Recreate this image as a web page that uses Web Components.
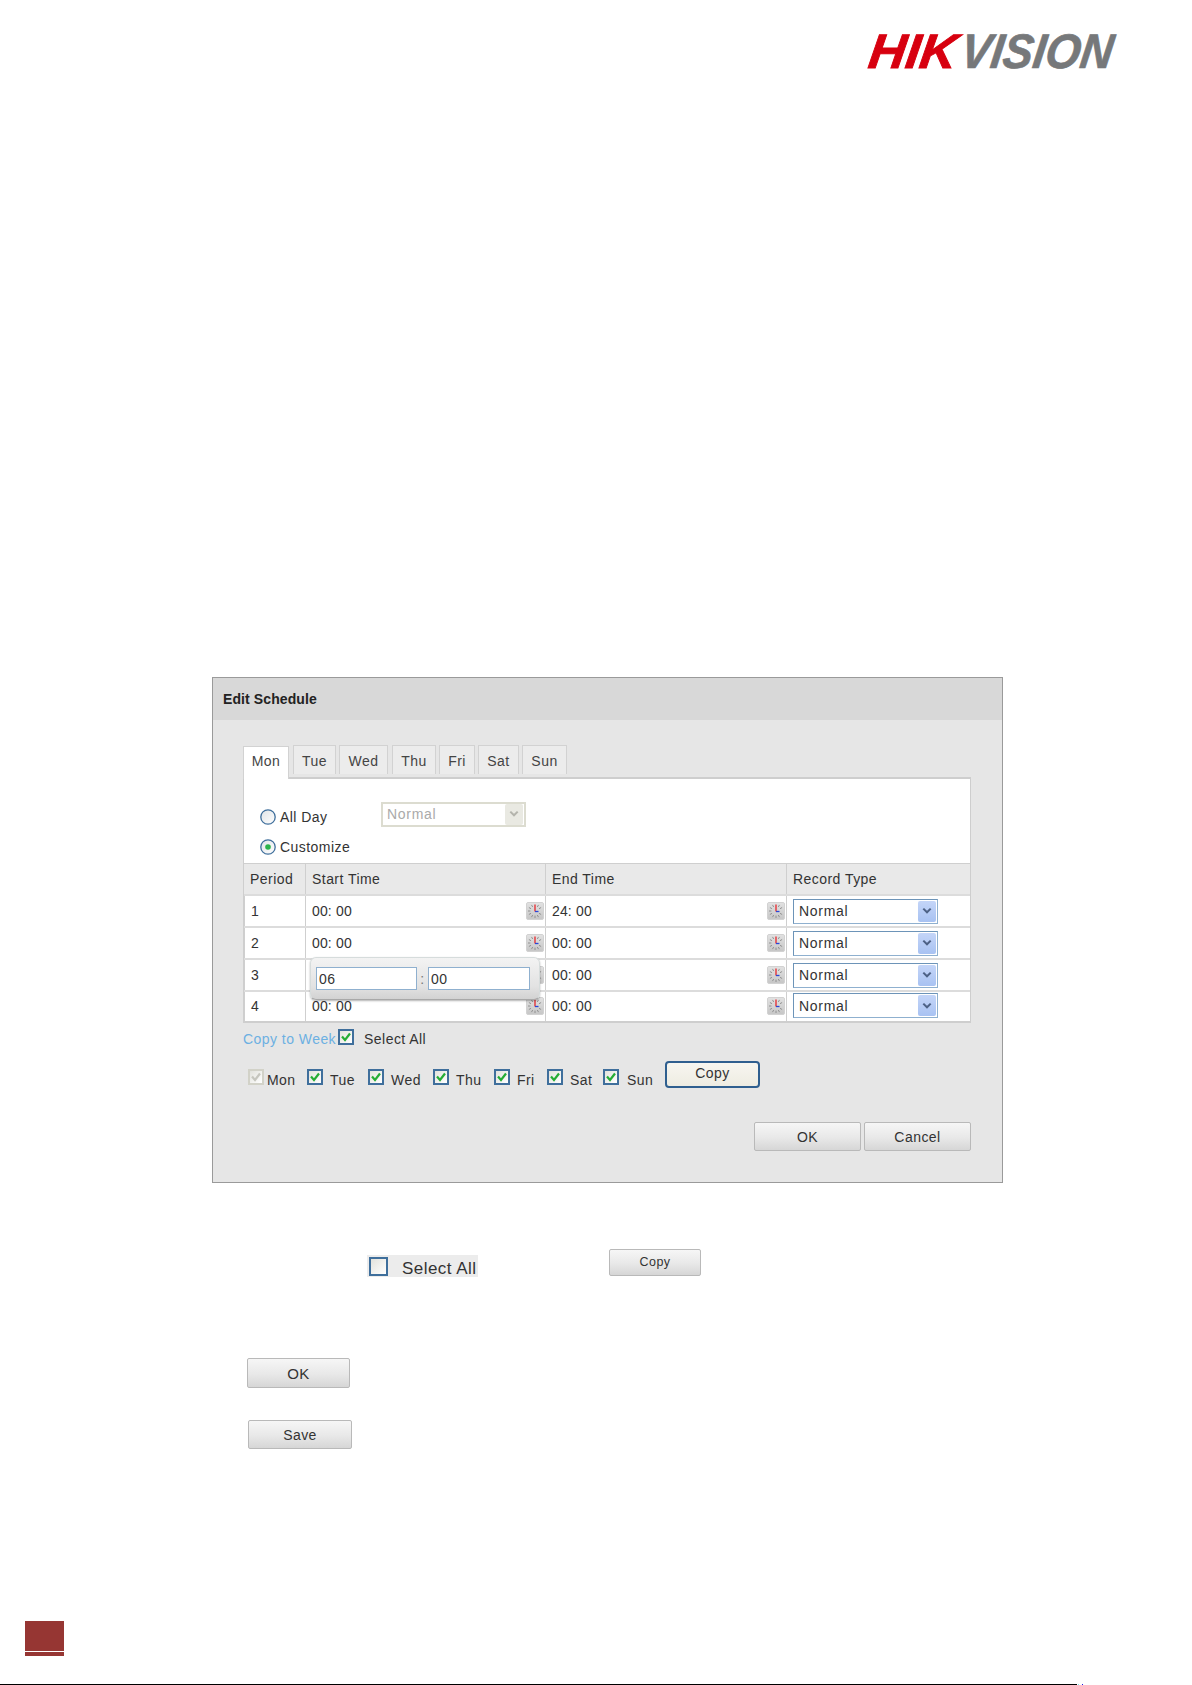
<!DOCTYPE html>
<html>
<head>
<meta charset="utf-8">
<title>Edit Schedule</title>
<style>
  html, body { margin: 0; padding: 0; background: #fff; }
  body { font-family: "Liberation Sans", Arial, sans-serif; font-size: 14px; letter-spacing: .45px; color: #333; }
</style>
</head>
<body>
<manual-page>
  <hik-logo slot="logo"></hik-logo>
  <edit-schedule slot="dialog"></edit-schedule>
  <note-icons slot="notes"></note-icons>
</manual-page>

<script>
class ManualPage extends HTMLElement{
    constructor(){
        super();
        this.attachShadow({mode:'open'});
        this.shadowRoot.innerHTML = `
        <style>
            :host{ display:flex; flex-direction:column; height:1685px; overflow:hidden; box-sizing:border-box; }
            header{ display:flex; justify-content:flex-end; padding:34px 75px 0 0; height:34px; }
            #dialog{ display:block; margin:609px 0 0 212px; }
            footer{ margin-top:auto; }
            #mark{ width:39px; margin-left:25px; }
            #mark div{ background:#963633; }
            #mark .a{ height:30px; margin-bottom:1px; }
            #mark .b{ height:4px; }
            #rule{ display:flex; align-items:stretch; height:1px; margin-top:28px; }
            #rule .line{ width:1077px; background:#000; }
            #rule .c1{ width:1px; margin-left:1px; background:#7fe9e9; }
            #rule .c2{ width:1px; margin-left:3px; background:#1a1ae6; }
        </style>
        <header><slot name="logo"></slot></header>
        <div id="dialog"><slot name="dialog"></slot></div>
        <slot name="notes"></slot>
        <footer>
            <div id="mark"><div class="a"></div><div class="b"></div></div>
            <div id="rule"><div class="line"></div><div class="c1"></div><div class="c2"></div></div>
        </footer>`;
    }
}

class HikLogo extends HTMLElement{
    constructor(){
        super();
        this.attachShadow({mode:'open'});
        this.shadowRoot.innerHTML = `
        <style>
            :host{ display:block; width:250px; height:34px; }
            svg{ display:block; overflow:visible; }
            text{ font-family:"Liberation Sans", Arial, sans-serif; font-weight:700; font-style:italic; font-size:48.5px; letter-spacing:0; }
        </style>
        <svg width="250" height="34" viewBox="0 0 250 34">
            <g transform="translate(0 33.6) skewX(-8)">
                <text x="0" y="0" textLength="88" lengthAdjust="spacingAndGlyphs" fill="#d7000f" stroke="#d7000f" stroke-width=".9">HIK</text>
                <text x="92" y="0" textLength="152" lengthAdjust="spacingAndGlyphs" fill="#76787a" stroke="#76787a" stroke-width=".7">VISION</text>
            </g>
        </svg>`;
    }
}

class HikButton extends HTMLElement{
    constructor(){
        super();
        this.attachShadow({mode:'open'});
        this.shadowRoot.innerHTML = `
        <style>
            :host{ display:flex; align-items:center; justify-content:center; box-sizing:border-box;
                   border:1px solid #b9b9b9; border-radius:2px; color:#333; font-size:14px;
                   background:linear-gradient(#f6f6f6,#e8e8e8 55%,#d6d6d6); }
            :host([primary]){ border:2px solid #2f5f8f; border-radius:4px; background:linear-gradient(#f7f6f0,#eeece2); padding-bottom:2px; }
        </style>
        <slot></slot>`;
    }
}

class HikCheck extends HTMLElement{
    constructor(){
        super();
        this.attachShadow({mode:'open'});
        const off = this.hasAttribute('disabled');
        const on = !this.hasAttribute('empty');
        this.shadowRoot.innerHTML = `
        <style>
            :host{ display:inline-flex; align-items:center; }
            #box{ width:var(--box,16px); height:var(--box,16px); box-sizing:border-box; flex:none;
                  border:2px solid ${off ? '#d2d2c8' : '#3f6f9c'};
                  background:linear-gradient(135deg,#e2e2dc,#fff); display:block; }
            svg{ display:block; }
            span{ margin-left:var(--label-gap,7px); position:relative; top:var(--label-drop,3px); }
        </style>
        <div id="box">${on ? `<svg width="12" height="12" viewBox="0 0 12 12"><path d="M2 5.5 5 9 10 2.5" fill="none" stroke="${off ? '#c6c6be' : '#25ad35'}" stroke-width="2.2"/></svg>` : ''}</div>
        <span><slot></slot></span>`;
    }
}

class HikRadio extends HTMLElement{
    constructor(){
        super();
        this.attachShadow({mode:'open'});
        const on = this.hasAttribute('checked');
        this.shadowRoot.innerHTML = `
        <style>
            :host{ display:flex; align-items:center; height:20px; }
            svg{ display:block; flex:none; margin-right:4px; }
        </style>
        <svg width="16" height="16" viewBox="0 0 16 16">
            <defs><linearGradient id="g" x1="0" y1="0" x2="1" y2="1"><stop offset="0" stop-color="#dfe3e6"/><stop offset="1" stop-color="#fff"/></linearGradient></defs>
            <circle cx="8" cy="8" r="7.2" fill="url(#g)" stroke="#3f6f9c" stroke-width="1.3"/>
            ${on ? '<circle cx="8" cy="8" r="2.8" fill="#2bb34a"/>' : ''}
        </svg>
        <slot></slot>`;
    }
}

class HikTab extends HTMLElement{
    constructor(){
        super();
        this.attachShadow({mode:'open'});
        this.shadowRoot.innerHTML = `
        <style>
            :host{ display:flex; align-items:center; justify-content:center; box-sizing:border-box; height:29px; margin-bottom:3px; padding-top:2px;
                   border:1px solid #d2d2d2; border-bottom:none; background:#ececec; color:#444; }
            :host([active]){ height:33px; background:#fff; margin-bottom:-2px; padding-top:0; padding-bottom:4px; position:relative; z-index:1; }
        </style>
        <slot></slot>`;
    }
}

class ClockIcon extends HTMLElement{
    constructor(){
        super();
        this.attachShadow({mode:'open'});
        let ticks = '';
        for(let i = 0; i < 12; i++){
            if(i === 0 || i === 3) continue;
            const a = i * Math.PI / 6;
            const s = Math.sin(a), c = Math.cos(a);
            ticks += `<line x1="${(9 + s * 4.6).toFixed(1)}" y1="${(9 - c * 4.6).toFixed(1)}" x2="${(9 + s * 7).toFixed(1)}" y2="${(9 - c * 7).toFixed(1)}"/>`;
        }
        this.shadowRoot.innerHTML = `
        <style>
            :host{ display:block; width:18px; height:18px; flex:none; }
            svg{ display:block; }
        </style>
        <svg width="18" height="18" viewBox="0 0 18 18">
            <defs><linearGradient id="g" x1="0" y1="0" x2="0" y2="1"><stop offset="0" stop-color="#e2e2e2"/><stop offset="1" stop-color="#c6c6c6"/></linearGradient></defs>
            <rect x=".5" y=".5" width="17" height="17" rx="1.5" fill="url(#g)" stroke="#d2d2d2"/>
            <g stroke="#8a8a8a" stroke-width=".9">${ticks}</g>
            <line x1="9" y1="2.5" x2="9" y2="9.5" stroke="#e8272c" stroke-width="1.3"/>
            <line x1="9" y1="9.5" x2="12.5" y2="9.5" stroke="#2a47d8" stroke-width="1.3"/>
        </svg>`;
    }
}

class TypeSelect extends HTMLElement{
    constructor(){
        super();
        this.attachShadow({mode:'open'});
        const off = this.hasAttribute('disabled');
        this.shadowRoot.innerHTML = `
        <style>
            :host{ display:flex; align-items:center; justify-content:space-between; box-sizing:border-box; width:145px; height:25px;
                   background:#fff; padding:0 1px 0 5px; color:#333; letter-spacing:.7px;
                   border:1px solid #8fb0cf; border-top-color:#6d94b8; border-left-color:#6d94b8; }
            :host([disabled]){ border:2px solid #dcdcd0; color:#aaa; padding-left:4px; }
            #arrow{ width:18px; height:21px; display:flex; align-items:center; justify-content:center; border-radius:2px;
                    background:${off ? '#e9e9e2' : 'linear-gradient(#c4d5f8,#a8c2f2)'}; }
            svg{ display:block; }
        </style>
        <slot></slot>
        <div id="arrow"><svg width="10" height="8" viewBox="0 0 10 8"><path d="M1.3 1.6 5 5.3 8.7 1.6" fill="none" stroke="${off ? '#b4b4ac' : '#4d6185'}" stroke-width="2"/></svg></div>`;
    }
}

class ScheduleRow extends HTMLElement{
    constructor(){
        super();
        this.attachShadow({mode:'open'});
        const p = this.getAttribute('period');
        const s = this.getAttribute('start') || '';
        const e = this.getAttribute('end');
        this.shadowRoot.innerHTML = `
        <style>
            :host{ display:grid; grid-template-columns:61px 240px 241px 1fr; height:32px; box-sizing:border-box; background:#fff; border-top:2px solid #dcdcdc; padding-bottom:1px; }
            :host(:last-of-type){ height:31px; }
            :host(:last-of-type) div > *{ position:relative; top:-1px; }
            div{ display:flex; align-items:center; justify-content:space-between; padding-left:6px; border-left:1px solid #cfcfcf; margin-bottom:-1px; }
            div:first-child{ border-left:none; }
            span{ letter-spacing:.15px; }
            clock-icon{ margin-right:1px; }
        </style>
        <div><span>${p}</span></div>
        <div><span>${s}</span><clock-icon></clock-icon></div>
        <div><span>${e}</span><clock-icon></clock-icon></div>
        <div><type-select>Normal</type-select></div>`;
    }
}

class TimePopup extends HTMLElement{
    constructor(){
        super();
        this.attachShadow({mode:'open'});
        this.shadowRoot.innerHTML = `
        <style>
            :host{ position:absolute; display:flex; align-items:center; justify-content:space-between; box-sizing:border-box; width:230px; height:43px; padding:0 9px 0 5px;
                   border:1px solid #d6dcdc; border-bottom-color:#a8a8a8; border-radius:6px;
                   background:linear-gradient(#f3f3f3,#e2e2e2 70%,#d2d2d2); box-shadow:0 1px 2px rgba(0,0,0,.3); color:#777; }
            span{ box-sizing:border-box; width:101px; height:23px; line-height:22px; padding-left:2px; background:#fff; color:#333; border:1px solid #8fb0cf; }
            span + b + span{ width:102px; }
            b{ font-weight:400; }
        </style>
        <span>06</span><b>:</b><span>00</span>`;
    }
}

class EditSchedule extends HTMLElement{
    constructor(){
        super();
        this.attachShadow({mode:'open'});
        this.shadowRoot.innerHTML = `
        <style>
            :host{ display:block; width:791px; height:506px; box-sizing:border-box; border:1px solid #9a9a9a; background:#e6e6e6; }
            h2{ margin:0; height:42px; box-sizing:border-box; padding-left:10px; background:#d8d8d8; font-size:14px; line-height:43px; font-weight:700; color:#222; letter-spacing:.1px; }
            #body{ padding:25px 31px 0 30px; }
            #tabs{ display:flex; align-items:flex-end; gap:3px; height:32px; }
            #panel{ position:relative; height:246px; box-sizing:border-box; background:#fff; border:1px solid #cecece; border-width:2px 1px 2px 1px; }
            #modes{ height:84px; box-sizing:border-box; padding:28px 0 0 16px; }
            .line{ display:flex; align-items:center; height:20px; }
            #modes .line + .line{ margin-top:10px; }
            #modes type-select{ margin-left:1px; position:relative; top:-3px; }
            #grid-head{ display:grid; grid-template-columns:61px 240px 241px 1fr; height:30px; background:#e9e9e9; border-top:1px solid #cfcfcf; }
            #grid-head div{ display:flex; align-items:center; padding-left:6px; border-left:1px solid #cfcfcf; }
            #grid-head div:first-child{ border-left:none; }
            time-popup{ left:66px; top:178px; z-index:2; }
            #copy{ display:flex; align-items:center; height:30px; margin-top:1px; }
            #copy a{ color:#6cb0e2; margin-right:2px; }
            #copy hik-check{ --label-gap:10px; --label-drop:2px; position:relative; top:-2px; }
            #days{ display:flex; align-items:center; height:28px; margin:6px 0 0 5px; }
            #days hik-check{ position:relative; top:3px; }
            #days hik-button{ width:95px; height:27px; margin-left:0; }
            #actions{ display:flex; justify-content:flex-end; gap:3px; margin-top:34px; }
            #actions hik-button{ width:107px; height:29px; }
        </style>
        <h2>Edit Schedule</h2>
        <div id="body">
            <div id="tabs">
                <hik-tab active style="width:46px;margin-right:1px">Mon</hik-tab>
                <hik-tab style="width:43px">Tue</hik-tab>
                <hik-tab style="width:49px">Wed</hik-tab>
                <hik-tab style="width:44px;margin-left:1px">Thu</hik-tab>
                <hik-tab style="width:36px">Fri</hik-tab>
                <hik-tab style="width:41px">Sat</hik-tab>
                <hik-tab style="width:45px">Sun</hik-tab>
            </div>
            <div id="panel">
                <div id="modes">
                    <div class="line"><hik-radio style="width:120px">All Day</hik-radio><type-select disabled>Normal</type-select></div>
                    <div class="line"><hik-radio checked>Customize</hik-radio></div>
                </div>
                <div id="grid-head"><div>Period</div><div>Start Time</div><div>End Time</div><div>Record Type</div></div>
                <schedule-row period="1" start="00: 00" end="24: 00"></schedule-row>
                <schedule-row period="2" start="00: 00" end="00: 00"></schedule-row>
                <schedule-row period="3" end="00: 00"></schedule-row>
                <schedule-row period="4" start="00: 00" end="00: 00"></schedule-row>
                <time-popup></time-popup>
            </div>
            <div id="copy"><a>Copy to Week</a><hik-check>Select All</hik-check></div>
            <div id="days">
                <hik-check disabled style="width:59px;--label-gap:3px">Mon</hik-check>
                <hik-check style="width:61px">Tue</hik-check>
                <hik-check style="width:65px">Wed</hik-check>
                <hik-check style="width:61px">Thu</hik-check>
                <hik-check style="width:53px">Fri</hik-check>
                <hik-check style="width:56px">Sat</hik-check>
                <hik-check style="width:62px;--label-gap:8px">Sun</hik-check>
                <hik-button primary>Copy</hik-button>
            </div>
            <div id="actions"><hik-button>OK</hik-button><hik-button>Cancel</hik-button></div>
        </div>`;
    }
}

class NoteIcons extends HTMLElement{
    constructor(){
        super();
        this.attachShadow({mode:'open'});
        this.shadowRoot.innerHTML = `
        <style>
            :host{ display:block; margin-top:66px; }
            #top{ display:flex; align-items:flex-start; margin-left:367px; }
            #all{ display:flex; align-items:center; box-sizing:border-box; width:111px; height:22px; margin-top:6px; padding-left:2px; background:#ececec; font-size:17px; white-space:nowrap; }
            #all hik-check{ --box:19px; --label-gap:14px; --label-drop:3px; }
            #copy{ width:92px; height:27px; margin-left:131px; font-size:12.5px; padding-bottom:1px; }
            #ok{ width:103px; height:30px; margin:81px 0 0 247px; font-size:15px; }
            #save{ width:104px; height:29px; margin:32px 0 0 248px; }
        </style>
        <div id="top">
            <div id="all"><hik-check empty>Select All</hik-check></div>
            <hik-button id="copy">Copy</hik-button>
        </div>
        <hik-button id="ok">OK</hik-button>
        <hik-button id="save">Save</hik-button>`;
    }
}

customElements.define('hik-check', HikCheck);
customElements.define('hik-radio', HikRadio);
customElements.define('hik-tab', HikTab);
customElements.define('hik-button', HikButton);
customElements.define('clock-icon', ClockIcon);
customElements.define('type-select', TypeSelect);
customElements.define('schedule-row', ScheduleRow);
customElements.define('time-popup', TimePopup);
customElements.define('edit-schedule', EditSchedule);
customElements.define('note-icons', NoteIcons);
customElements.define('hik-logo', HikLogo);
customElements.define('manual-page', ManualPage);
</script>
</body>
</html>
